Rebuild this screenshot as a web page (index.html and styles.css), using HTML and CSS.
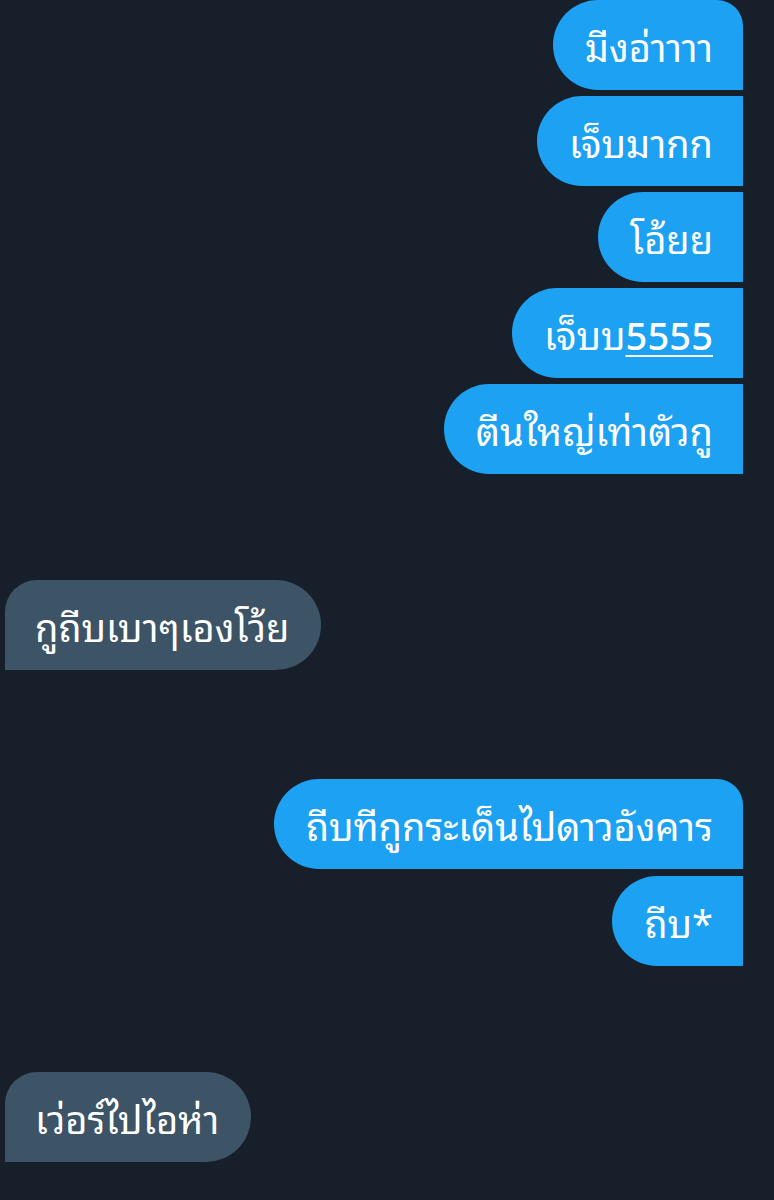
FILE: index.html
```html
<!DOCTYPE html>
<html lang="th">
<head>
<meta charset="utf-8">
<link rel="stylesheet" href="styles.css">
</head>
<body>
<main class="chat">
  <section class="group sent">
    <div class="bubble first">มีงอ่าาาา</div>
    <div class="bubble">เจ็บมากก</div>
    <div class="bubble">โอ้ยย</div>
    <div class="bubble">เจ็บบ<span class="link">5555</span></div>
    <div class="bubble last">ตีนใหญ่เท่าตัวกู</div>
  </section>
  <section class="group received">
    <div class="bubble">กูถีบเบาๆเองโว้ย</div>
  </section>
  <section class="group sent spaced">
    <div class="bubble first">ถีบทีกูกระเด็นไปดาวอังคาร</div>
    <div class="bubble last">ถีบ*</div>
  </section>
  <section class="group received">
    <div class="bubble">เว่อร์ไปไอห่า</div>
  </section>
</main>
</body>
</html>
```

FILE: styles.css
```css
html, body {
  margin: 0;
  padding: 0;
  background: #17202a;
}

.chat {
  display: flex;
  flex-direction: column;
  gap: 106px;
  font-family: "Noto Sans Thai Looped", "Noto Sans Thai UI", "Noto Sans", "Noto Sans Thai", sans-serif;
  color: #ffffff;
}

.group {
  display: flex;
  flex-direction: column;
  gap: 6px;
}

.group.spaced {
  margin-top: 3px;
  gap: 7px;
}

.group.sent {
  align-items: flex-end;
  padding-right: 31px;
}

.group.received {
  align-items: flex-start;
  padding-left: 5px;
}

.bubble {
  box-sizing: border-box;
  height: 90px;
  display: flex;
  align-items: center;
  padding: 0 30px 0 32px;
  font-size: 38px;
  font-weight: 400;
  line-height: 1;
  white-space: nowrap;
}

.sent .bubble {
  background: #1da1f2;
  border-radius: 45px 0 0 45px;
}

.sent .bubble.first {
  border-top-right-radius: 26px;
}

.received .bubble {
  background: #3d5466;
  border-radius: 32px 45px 45px 0;
  padding: 0 32px 0 30px;
}

.link {
  font-weight: 500;
  text-decoration: underline;
  text-decoration-thickness: 2px;
  text-underline-offset: 5px;
}
```
